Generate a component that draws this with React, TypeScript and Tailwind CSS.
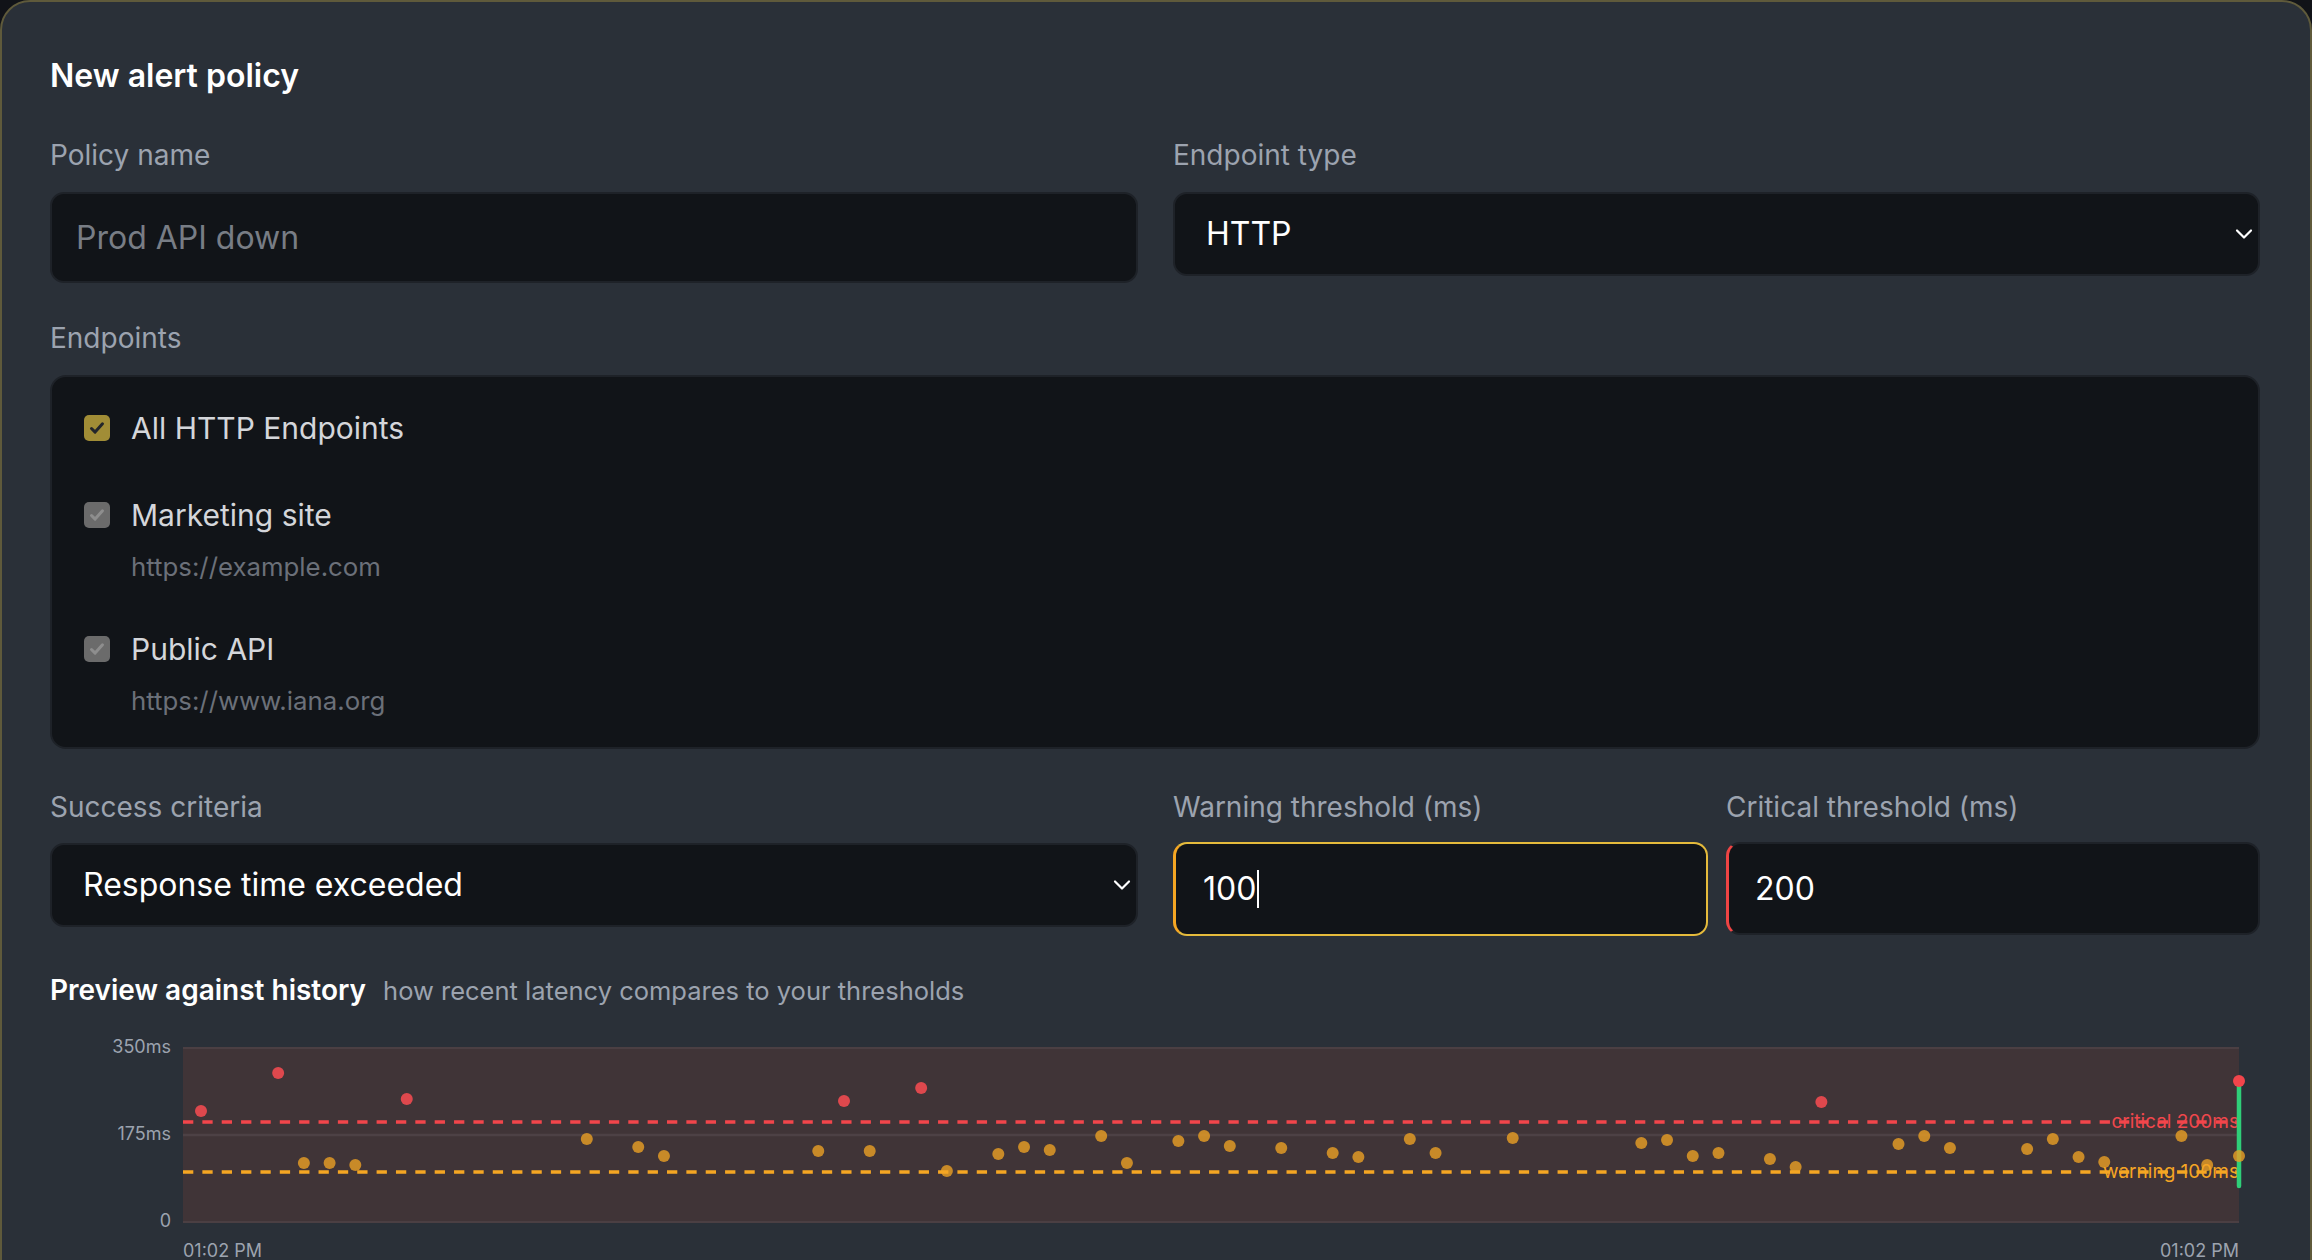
import React from "react";

type Pt = { k: number; y: number; crit?: boolean };

// latency history, k = sample slot, y = pixel row on the full page
const history: Pt[] = [
    { k: 0, y: 1110, crit: true },
    { k: 3, y: 1072, crit: true },
    { k: 4, y: 1162 },
    { k: 5, y: 1162 },
    { k: 6, y: 1164 },
    { k: 8, y: 1098, crit: true },
    { k: 15, y: 1138 },
    { k: 17, y: 1146 },
    { k: 18, y: 1155 },
    { k: 24, y: 1150 },
    { k: 25, y: 1100, crit: true },
    { k: 26, y: 1150 },
    { k: 28, y: 1087, crit: true },
    { k: 29, y: 1170 },
    { k: 31, y: 1153 },
    { k: 32, y: 1146 },
    { k: 33, y: 1149 },
    { k: 35, y: 1135 },
    { k: 36, y: 1162 },
    { k: 38, y: 1140 },
    { k: 39, y: 1135 },
    { k: 40, y: 1145 },
    { k: 42, y: 1147 },
    { k: 44, y: 1152 },
    { k: 45, y: 1156 },
    { k: 47, y: 1138 },
    { k: 48, y: 1152 },
    { k: 51, y: 1137 },
    { k: 56, y: 1142 },
    { k: 57, y: 1139 },
    { k: 58, y: 1155 },
    { k: 59, y: 1152 },
    { k: 61, y: 1158 },
    { k: 62, y: 1166 },
    { k: 63, y: 1101, crit: true },
    { k: 66, y: 1143 },
    { k: 67, y: 1135 },
    { k: 68, y: 1147 },
    { k: 71, y: 1148 },
    { k: 72, y: 1138 },
    { k: 73, y: 1156 },
    { k: 74, y: 1161 },
    { k: 77, y: 1135 },
    { k: 78, y: 1164 },
];

const Chevron = () => (
    <svg width="18" height="12" viewBox="0 0 18 12" fill="none">
        <path d="M2 2.5l7 7 7-7" stroke="#ffffff" strokeWidth="2.2" strokeLinecap="round" strokeLinejoin="round" />
    </svg>
);

const Check = ({ on }: { on: boolean }) => (
    <span
        className={`flex h-[26px] w-[26px] shrink-0 items-center justify-center rounded-[5px] ${
            on ? "bg-[#a18d36]" : "bg-[#6b6b6b]"
        }`}
    >
        <svg width="18" height="18" viewBox="0 0 18 18" fill="none">
            <path
                d="M3.5 9.5l3.6 3.6L14.5 4.8"
                stroke={on ? "#23262b" : "#8e8e8e"}
                strokeWidth="3"
                strokeLinecap="round"
                strokeLinejoin="round"
            />
        </svg>
    </span>
);

const Field = ({ label, children }: { label: string; children: React.ReactNode }) => (
    <div className="flex min-w-0 flex-col">
        <label className="text-[28px] leading-[42px] text-[#9ca3af]">{label}</label>
        <div className="mt-[16px]">{children}</div>
    </div>
);

const Select = ({ value }: { value: string }) => (
    <div className="flex h-[84px] items-center justify-between rounded-[14px] border-2 border-[#1e2228] bg-[#111418] pl-[31px] pr-[5px] text-[32px] text-white">
        <span>{value}</span>
        <Chevron />
    </div>
);

const Endpoint = ({ name, url }: { name: string; url?: string }) => (
    <div className="flex flex-col">
        <div className="flex h-[48px] items-center gap-[21px]">
            <Check on={!url} />
            <span className="text-[30px] leading-[48px] text-[#d4d6da]">{name}</span>
        </div>
        {url && <div className="mt-[8px] pl-[47px] text-[25.8px] leading-[39px] text-[#6b7079]">{url}</div>}
    </div>
);

const HistoryChart = () => {
    const ox = 50;
    const oy = 1030;
    const px = (k: number) => 201 - ox + k * 25.72;
    const py = (y: number) => y - oy;
    return (
        <svg width="2209" height="240" viewBox="0 0 2209 240" className="block">
            <rect x="133" y="16" width="2056" height="175" fill="#403437" />
            <line x1="133" x2="2189" y1="17" y2="17" stroke="#4b3f43" strokeWidth="2" />
            <line x1="133" x2="2189" y1="104" y2="104" stroke="#4d4145" strokeWidth="2.5" />
            <line x1="133" x2="2189" y1="191" y2="191" stroke="#4b3f43" strokeWidth="2" />

            <g fontSize="18" fill="#9ca3af" textAnchor="end" dominantBaseline="middle">
                <text x="121" y="17">350ms</text>
                <text x="121" y="104">175ms</text>
                <text x="121" y="191">0</text>
            </g>

            {history.map((p) => (
                <circle
                    key={p.k}
                    cx={px(p.k)}
                    cy={py(p.y)}
                    r="6"
                    fill={p.crit ? "#f04a50" : "#e69e24"}
                    opacity={p.crit ? 0.9 : 0.82}
                />
            ))}

            <text x="2189" y="92" fontSize="19" fill="#f0474c" textAnchor="end" dominantBaseline="middle">
                critical 200ms
            </text>
            <text x="2189" y="142" fontSize="19" fill="#f5a524" textAnchor="end" dominantBaseline="middle">
                warning 100ms
            </text>
            <line x1="133" x2="2189" y1="91" y2="91" stroke="#f2454b" strokeWidth="3.5" strokeDasharray="10.3 9.06" />
            <line x1="133" x2="2189" y1="141" y2="141" stroke="#f5a623" strokeWidth="3.5" strokeDasharray="10.3 9.06" />

            <line x1="2189" x2="2189" y1="53" y2="155" stroke="#2fcf78" strokeWidth="4.5" strokeLinecap="round" />
            <circle cx="2189" cy="125" r="6" fill="#e69e24" opacity="0.82" />
            <circle cx="2189" cy="50" r="6" fill="#f2454b" />

            <g fontSize="18" fill="#9ca3af">
                <text x="133" y="226">01:02 PM</text>
                <text x="2189" y="226" textAnchor="end">01:02 PM</text>
            </g>
        </svg>
    );
};

export default function App() {
    return (
        <div className="min-h-screen bg-[#111318] font-['Inter',sans-serif]">
            <div className="rounded-[30px] border-2 border-[#5f5a3b] bg-[#2a3038] pl-[48px] pr-[50px] pt-[50px] pb-[60px]">
                <h1 className="text-[32px] font-semibold leading-[48px] text-white">New alert policy</h1>

                <div className="mt-[34px] grid grid-cols-[1088px_1087px] gap-x-[35px]">
                    <Field label="Policy name">
                        <div className="flex h-[91px] items-center rounded-[14px] border-2 border-[#1e2228] bg-[#111418] px-[24px] text-[32px] text-[#787d85]">
                            Prod API down
                        </div>
                    </Field>
                    <div className="-mb-[8px]">
                        <Field label="Endpoint type">
                            <Select value="HTTP" />
                        </Field>
                    </div>
                </div>

                <div className="mt-[34px]">
                    <div className="text-[28px] leading-[42px] text-[#9ca3af]">Endpoints</div>
                    <div className="mt-[16px] flex flex-col gap-[39px] rounded-[16px] border-2 border-[#1e2228] bg-[#111418] px-[32px] pt-[27px] pb-[27px]">
                        <Endpoint name="All HTTP Endpoints" />
                        <Endpoint name="Marketing site" url="https://example.com" />
                        <Endpoint name="Public API" url="https://www.iana.org" />
                    </div>
                </div>

                <div className="mt-[37px] grid grid-cols-[1088px_1087px] items-start gap-x-[35px]">
                    <div className="flex flex-col">
                        <label className="text-[28px] leading-[42px] text-[#9ca3af]">Success criteria</label>
                        <div className="mt-[15px]">
                            <Select value="Response time exceeded" />
                        </div>
                    </div>
                    <div className="grid grid-cols-[535px_534px] gap-x-[18px]">
                        <div className="flex flex-col">
                            <label className="text-[28px] leading-[42px] text-[#9ca3af]">Warning threshold (ms)</label>
                            <div className="mt-[14px] flex h-[94px] items-center rounded-[14px] border-2 border-[#e5bb3c] border-l-[3px] border-l-[#f5a623] bg-[#111418] px-[27px] text-[32px] text-white">
                                100
                                <span className="ml-[1px] h-[38px] w-[2px] bg-white" />
                            </div>
                        </div>
                        <div className="flex flex-col">
                            <label className="text-[28px] leading-[42px] text-[#9ca3af]">Critical threshold (ms)</label>
                            <div className="mt-[14px] flex h-[93px] items-center rounded-[14px] border-2 border-[#1e2228] border-l-[3px] border-l-[#ef4444] bg-[#111418] px-[26px] text-[32px] text-white">
                                200
                            </div>
                        </div>
                    </div>
                </div>

                <div className="mt-[33px] flex items-baseline gap-[17px]">
                    <span className="text-[28px] font-semibold leading-[42px] text-white">Preview against history</span>
                    <span className="text-[25.5px] leading-[42px] text-[#9ca3af]">how recent latency compares to your thresholds</span>
                </div>

                <div className="mt-[19px]">
                    <HistoryChart />
                </div>
            </div>
        </div>
    );
}
